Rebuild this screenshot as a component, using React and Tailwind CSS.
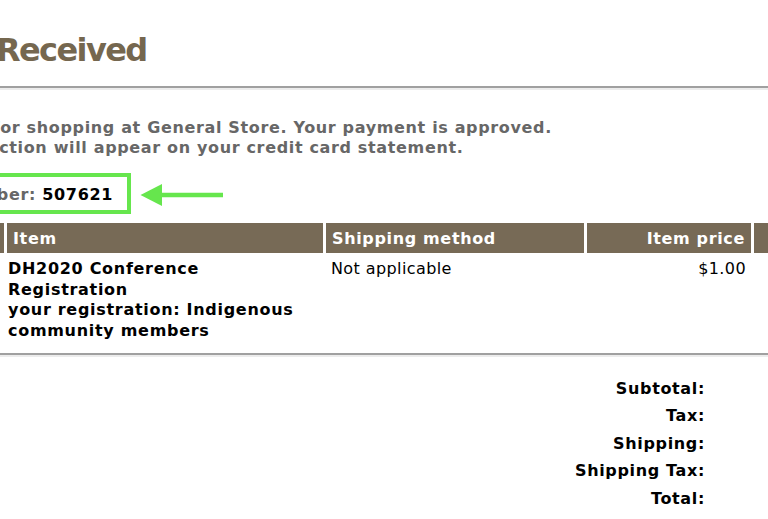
import React from 'react'

const totals = ['Subtotal:', 'Tax:', 'Shipping:', 'Shipping Tax:', 'Total:']

function Arrow() {
  return (
    <svg width="84" height="24" viewBox="0 0 84 24" className="ml-[9px] mt-[2px]">
      <polygon points="0.5,12 22,1 22,23" fill="#66e64d" />
      <line x1="20" y1="12" x2="83" y2="12" stroke="#66e64d" strokeWidth="4.5" />
    </svg>
  )
}

export default function App() {
  return (
    <div className="h-[519px] w-[768px] overflow-hidden bg-white font-['DejaVu_Sans',sans-serif] text-black">
      <div className="pt-[30px]">
        <h1 className="-ml-[109px] whitespace-nowrap text-[32px] font-bold leading-[40px] tracking-[-1.6px] text-[#75674f]">
          Order Received
        </h1>
      </div>

      {/* rule under heading */}
      <div className="mt-[16px]">
        <div className="h-[2px] bg-[#a0a0a0]" />
        <div className="h-[2px] bg-[#ececec]" />
      </div>

      <div className="mt-[28px] text-[16px] font-bold leading-[20px] tracking-[0.65px] text-[#676767] whitespace-nowrap">
        <div className="-ml-[113px]">Thank you for shopping at General Store. Your payment is approved.</div>
        <div className="-ml-[112px]">Your transaction will appear on your credit card statement.</div>
      </div>

      {/* order number */}
      <div className="mt-[15px] flex items-center">
        <div className="-ml-[129px] w-[260px] shrink-0 border-4 border-[#66e64d] pb-[5px] pr-[14px] pt-[8px] text-right text-[16px] font-bold leading-[20px] tracking-[0.65px] whitespace-nowrap">
          <span className="text-[#676767]">Order number: </span>
          <span className="text-black">507621</span>
        </div>
        <Arrow />
      </div>

      {/* items table */}
      <div className="mt-[9px] grid grid-cols-[4px_316px_258px_164px_1fr] gap-x-[3px] text-[16px] leading-[20px]">
        <div className="h-[30px] bg-[#776a56]" />
        <div className="h-[30px] bg-[#776a56] pl-[6px] pt-[6px] font-bold tracking-[0.65px] text-white">Item</div>
        <div className="h-[30px] bg-[#776a56] pl-[6px] pt-[6px] font-bold tracking-[0.65px] text-white whitespace-nowrap">Shipping method</div>
        <div className="h-[30px] bg-[#776a56] pr-[6px] pt-[6px] text-right font-bold tracking-[0.65px] text-white">Item price</div>
        <div className="h-[30px] bg-[#776a56]" />

        <div />
        <div className="pl-[1px] pt-[6px] pb-[11px] font-bold leading-[20.7px] tracking-[0.7px] whitespace-nowrap">
          <div>DH2020 Conference</div>
          <div>Registration</div>
          <div>your registration: Indigenous</div>
          <div>community members</div>
        </div>
        <div className="pl-[5px] pt-[6px] leading-[20.7px] tracking-[0.4px]">Not applicable</div>
        <div className="pr-[5px] pt-[6px] text-right leading-[20.7px] tracking-[0.4px]">$1.00</div>
        <div />
      </div>

      {/* rule under table */}
      <div>
        <div className="h-[2px] bg-[#a0a0a0]" />
        <div className="h-[2px] bg-[#ececec]" />
      </div>

      <div className="mt-[18px] flex flex-col items-end pr-[63px] text-[16px] font-bold leading-[27.5px] tracking-[0.65px]">
        {totals.map((label) => (
          <div key={label} className="whitespace-nowrap">{label}</div>
        ))}
      </div>
    </div>
  )
}
